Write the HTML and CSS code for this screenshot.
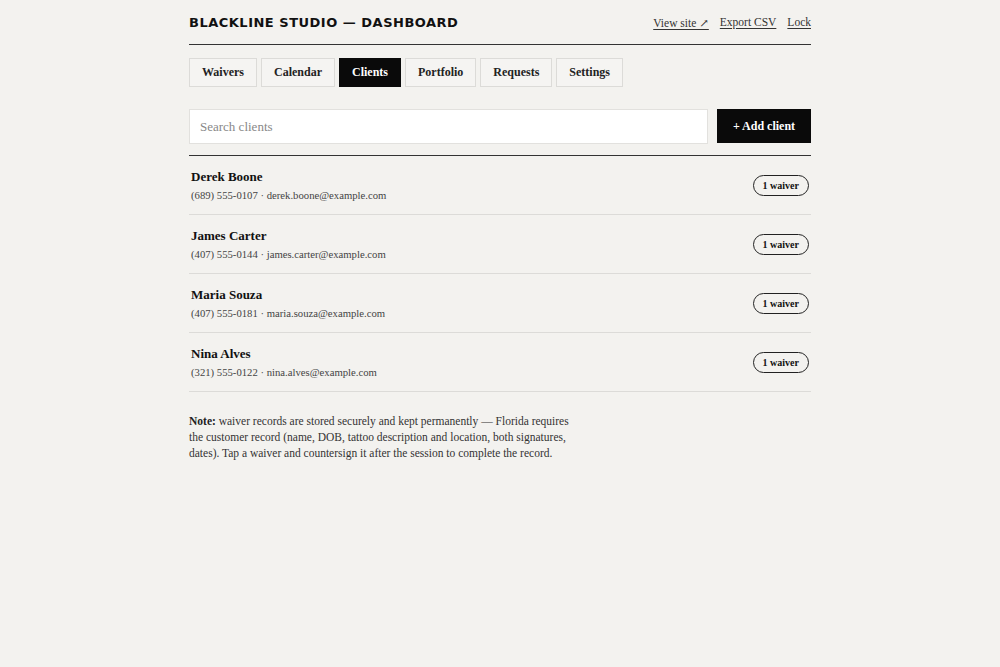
FILE: index.html
```html
<!DOCTYPE html>
<html lang="en">
<head>
    <meta charset="UTF-8">
    <title>Blackline Studio — Dashboard</title>
    <link rel="stylesheet" href="styles.css">
</head>
<body>
<div class="wrap">
    <div class="topbar">
        <h1 class="brand">BLACKLINE STUDIO — DASHBOARD</h1>
        <div class="toplinks">
            <a href="#">View site ↗</a>
            <a href="#">Export CSV</a>
            <a href="#">Lock</a>
        </div>
    </div>

    <div class="tabs">
        <button class="tab">Waivers</button>
        <button class="tab">Calendar</button>
        <button class="tab active">Clients</button>
        <button class="tab">Portfolio</button>
        <button class="tab">Requests</button>
        <button class="tab">Settings</button>
    </div>

    <div class="searchrow">
        <input class="search" type="text" placeholder="Search clients">
        <button class="addbtn">+ Add client</button>
    </div>

    <ul class="clients">
        <li class="client">
            <div>
                <div class="cname">Derek Boone</div>
                <div class="cmeta">(689) 555-0107 · derek.boone@example.com</div>
            </div>
            <span class="pill">1 waiver</span>
        </li>
        <li class="client">
            <div>
                <div class="cname">James Carter</div>
                <div class="cmeta">(407) 555-0144 · james.carter@example.com</div>
            </div>
            <span class="pill">1 waiver</span>
        </li>
        <li class="client">
            <div>
                <div class="cname">Maria Souza</div>
                <div class="cmeta">(407) 555-0181 · maria.souza@example.com</div>
            </div>
            <span class="pill">1 waiver</span>
        </li>
        <li class="client">
            <div>
                <div class="cname">Nina Alves</div>
                <div class="cmeta">(321) 555-0122 · nina.alves@example.com</div>
            </div>
            <span class="pill">1 waiver</span>
        </li>
    </ul>

    <p class="note"><b>Note:</b> waiver records are stored securely and kept permanently — Florida requires
        the customer record (name, DOB, tattoo description and location, both signatures,
        dates). Tap a waiver and countersign it after the session to complete the record.</p>
</div>
</body>
</html>
```

FILE: styles.css
```css
body{
    margin: 0;
    background: #f3f2ef;
    color: #111;
    font-family: "Liberation Serif", "DejaVu Serif", serif;
}
.wrap{
    width: 622px;
    margin: 0 auto;
    padding-top: 15px;
}
.topbar{
    display: flex;
    justify-content: space-between;
    align-items: center;
    padding-bottom: 14px;
    border-bottom: 1.5px solid #333;
}
.brand{
    margin: 0;
    font-family: "DejaVu Sans", sans-serif;
    font-size: 13px;
    font-weight: bold;
    letter-spacing: 0.5px;
    color: #111;
}
.toplinks{
    display: flex;
    gap: 11px;
    font-size: 11.5px;
}
.toplinks a{
    color: #333;
    text-decoration: underline;
    text-underline-offset: 2px;
}
.tabs{
    display: flex;
    gap: 4px;
    margin-top: 13px;
}
.tab{
    font-family: inherit;
    font-size: 12px;
    font-weight: bold;
    color: #222;
    background: #f5f4f2;
    border: 1px solid #dcdbd8;
    padding: 0 12px;
    height: 29px;
}
.tab.active{
    background: #0a0a0a;
    color: #fff;
    border-color: #0a0a0a;
}
.searchrow{
    display: flex;
    gap: 9px;
    margin-top: 22px;
    padding-bottom: 11px;
    border-bottom: 1.5px solid #333;
}
.search{
    flex: 1;
    height: 35px;
    box-sizing: border-box;
    border: 1px solid #e2e1de;
    background: #fff;
    padding: 0 10px;
    font-family: inherit;
    font-size: 13px;
}
.search::placeholder{
    color: #888;
}
.addbtn{
    width: 94px;
    height: 34px;
    background: #0a0a0a;
    color: #fff;
    border: none;
    font-family: inherit;
    font-size: 12px;
    font-weight: bold;
}
.clients{
    list-style: none;
    margin: 0;
    padding: 0;
}
.client{
    display: flex;
    justify-content: space-between;
    align-items: center;
    height: 58px;
    padding: 0 2px;
    border-bottom: 1px solid #dcdbd8;
}
.cname{
    font-size: 13px;
    font-weight: bold;
}
.cmeta{
    font-size: 10.7px;
    color: #444;
    margin-top: 4px;
}
.pill{
    font-size: 10px;
    font-weight: bold;
    border: 1px solid #222;
    border-radius: 12px;
    padding: 4px 9px;
}
.note{
    margin: 21px 0 0;
    width: 392px;
    font-size: 11.5px;
    line-height: 16px;
    color: #333;
}
.note b{
    color: #222;
}
```
